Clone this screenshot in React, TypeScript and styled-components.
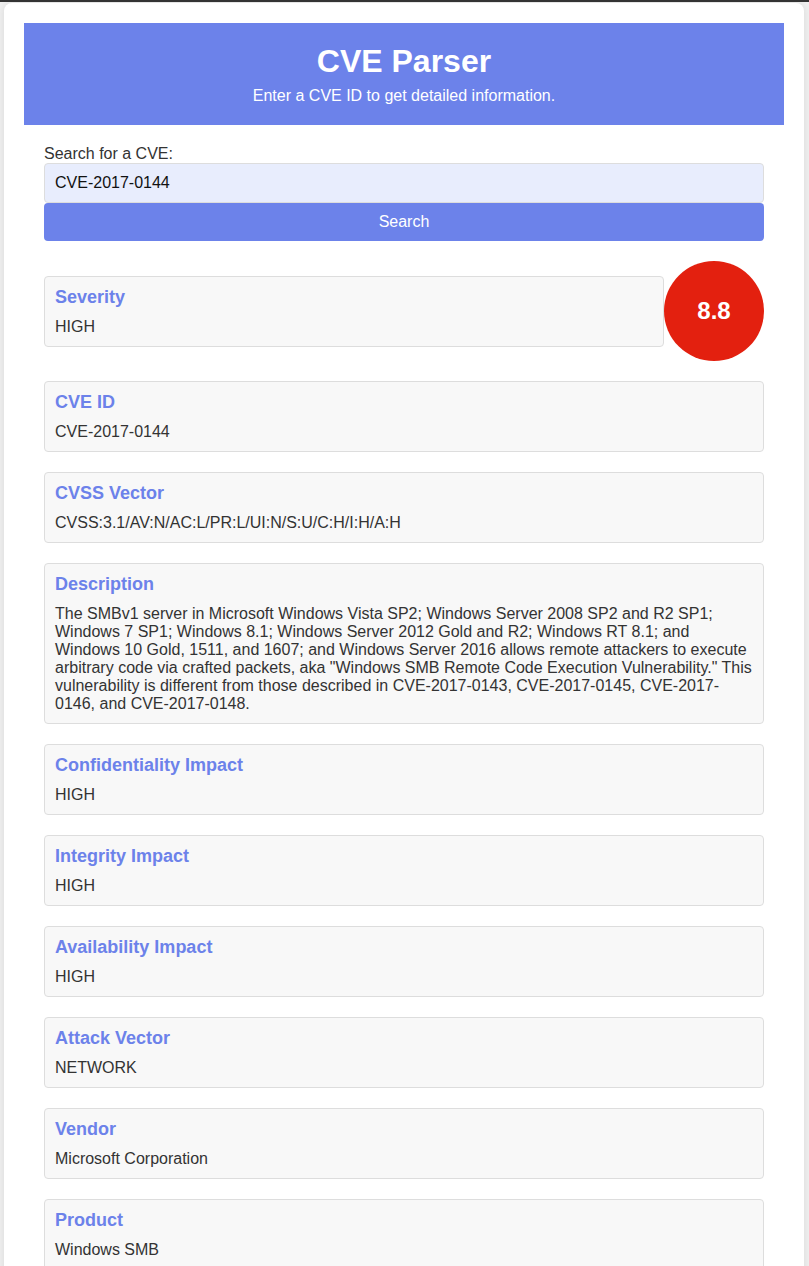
import React from "react";
import styled, { createGlobalStyle } from "styled-components";

const GlobalStyle = createGlobalStyle`
  html, body {
    margin: 0;
    padding: 0;
  }
  body {
    background: #f0f0f0;
    border-top: 2px solid #333333;
    font-family: "Liberation Sans", Arial, sans-serif;
    color: #333333;
  }
  * { box-sizing: border-box; }
`;

const Container = styled.div`
  max-width: 800px;
  margin: 1px 5px 0 4px;
  background: #ffffff;
  border-radius: 8px 8px 0 0;
  box-shadow: 0 0 8px rgba(0, 0, 0, 0.1);
  padding: 20px;
  min-height: 1300px;
`;

const Header = styled.header`
  background: #6c82ea;
  color: #ffffff;
  text-align: center;
  padding: 20px;
`;

const Title = styled.h1`
  margin: 0 0 7px;
  font-size: 32px;
  font-weight: bold;
`;

const Subtitle = styled.p`
  margin: 0;
  font-size: 16px;
`;

const Main = styled.main`
  padding: 20px;
`;

const Form = styled.form`
  display: flex;
  flex-direction: column;
`;

const Label = styled.label`
  font-size: 16px;
  color: #333333;
`;

const Input = styled.input`
  height: 40px;
  padding: 10px;
  font-size: 16px;
  font-family: inherit;
  color: #111111;
  background: #e8edfd;
  border: 1px solid #dddddd;
  border-radius: 4px;
  outline: none;
`;

const Button = styled.button`
  height: 38px;
  padding: 10px;
  font-size: 16px;
  font-family: inherit;
  color: #ffffff;
  background: #6c82ea;
  border: none;
  border-radius: 4px;
  cursor: pointer;
`;

const Results = styled.div`
  margin-top: 20px;
  display: flex;
  flex-direction: column;
  gap: 20px;
`;

const SeverityRow = styled.div`
  display: flex;
  align-items: center;
`;

const Card = styled.div`
  flex: 1;
  background: #f8f8f8;
  border: 1px solid #dddddd;
  border-radius: 4px;
  padding: 10px;
`;

const CardTitle = styled.h3`
  margin: 0 0 10px;
  font-size: 18px;
  font-weight: bold;
  color: #6c82ea;
`;

const CardValue = styled.p`
  margin: 0;
  font-size: 16px;
  line-height: 18px;
  color: #333333;
`;

const ScoreCircle = styled.div<{ $color: string }>`
  width: 100px;
  height: 100px;
  flex: none;
  border-radius: 50%;
  background: ${(p) => p.$color};
  color: #ffffff;
  display: flex;
  align-items: center;
  justify-content: center;
  font-size: 24px;
  font-weight: bold;
`;

const fields: { title: string; value: string }[] = [
  { title: "CVE ID", value: "CVE-2017-0144" },
  { title: "CVSS Vector", value: "CVSS:3.1/AV:N/AC:L/PR:L/UI:N/S:U/C:H/I:H/A:H" },
  {
    title: "Description",
    value:
      'The SMBv1 server in Microsoft Windows Vista SP2; Windows Server 2008 SP2 and R2 SP1; Windows 7 SP1; Windows 8.1; Windows Server 2012 Gold and R2; Windows RT 8.1; and Windows 10 Gold, 1511, and 1607; and Windows Server 2016 allows remote attackers to execute arbitrary code via crafted packets, aka "Windows SMB Remote Code Execution Vulnerability." This vulnerability is different from those described in CVE-2017-0143, CVE-2017-0145, CVE-2017-0146, and CVE-2017-0148.',
  },
  { title: "Confidentiality Impact", value: "HIGH" },
  { title: "Integrity Impact", value: "HIGH" },
  { title: "Availability Impact", value: "HIGH" },
  { title: "Attack Vector", value: "NETWORK" },
  { title: "Vendor", value: "Microsoft Corporation" },
  { title: "Product", value: "Windows SMB" },
];

export default function App() {
  return (
    <>
      <GlobalStyle />
      <Container>
        <Header>
          <Title>CVE Parser</Title>
          <Subtitle>Enter a CVE ID to get detailed information.</Subtitle>
        </Header>
        <Main>
          <Form onSubmit={(e) => e.preventDefault()}>
            <Label htmlFor="cve">Search for a CVE:</Label>
            <Input id="cve" defaultValue="CVE-2017-0144" />
            <Button type="submit">Search</Button>
          </Form>
          <Results>
            <SeverityRow>
              <Card>
                <CardTitle>Severity</CardTitle>
                <CardValue>HIGH</CardValue>
              </Card>
              <ScoreCircle $color="#e3200f">8.8</ScoreCircle>
            </SeverityRow>
            {fields.map((f) => (
              <Card key={f.title}>
                <CardTitle>{f.title}</CardTitle>
                <CardValue>{f.value}</CardValue>
              </Card>
            ))}
          </Results>
        </Main>
      </Container>
    </>
  );
}
